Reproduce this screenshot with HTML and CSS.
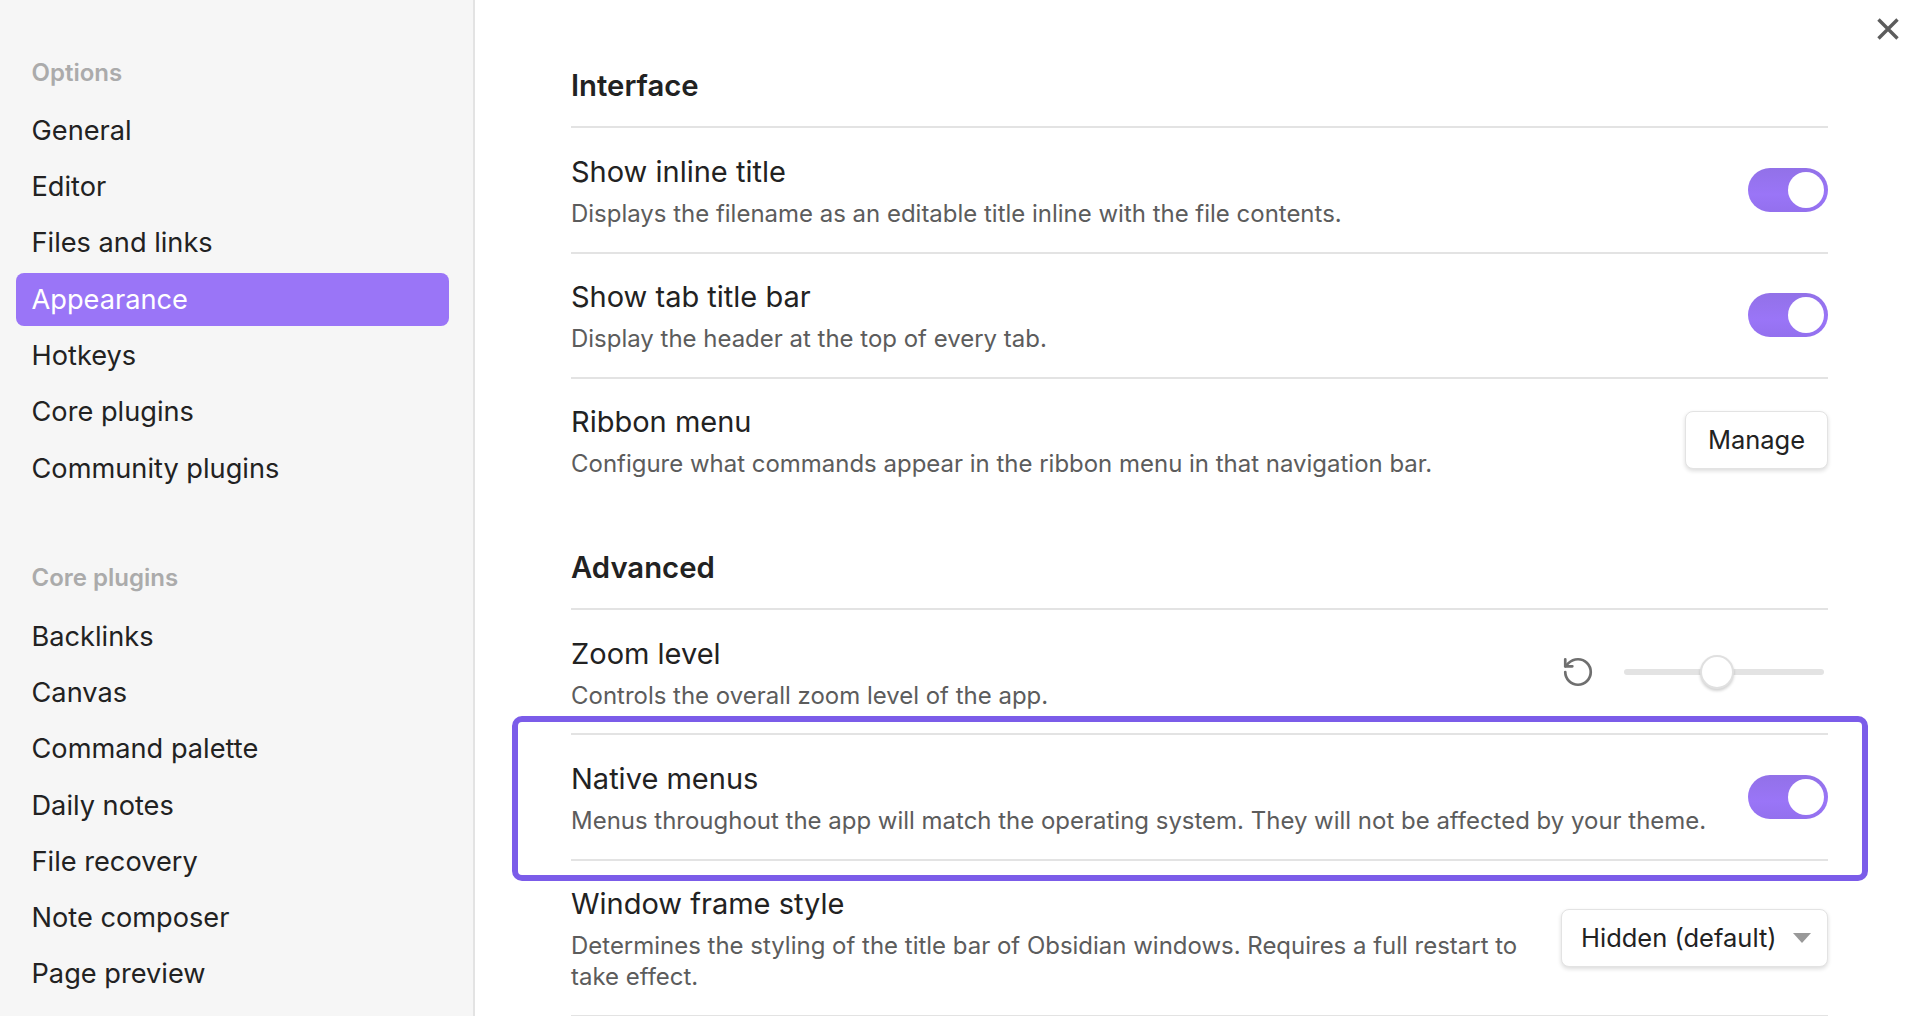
FILE: index.html
```html
<!DOCTYPE html>
<html lang="en">
<head>
  <meta charset="UTF-8" />
  <title>Settings</title>
  <link rel="stylesheet" href="styles.css">
</head>
<body>

<div class="app">
  <nav class="sidebar">
    <div class="group">
      <div class="group-title">Options</div>
      <div class="nav-item">General</div>
      <div class="nav-item">Editor</div>
      <div class="nav-item">Files and links</div>
      <div class="nav-item active">Appearance</div>
      <div class="nav-item">Hotkeys</div>
      <div class="nav-item">Core plugins</div>
      <div class="nav-item">Community plugins</div>
    </div>
    <div class="group">
      <div class="group-title">Core plugins</div>
      <div class="nav-item">Backlinks</div>
      <div class="nav-item">Canvas</div>
      <div class="nav-item">Command palette</div>
      <div class="nav-item">Daily notes</div>
      <div class="nav-item">File recovery</div>
      <div class="nav-item">Note composer</div>
      <div class="nav-item">Page preview</div>
    </div>
  </nav>

  <main class="content">
    <svg class="close" viewBox="0 0 22 22" width="22" height="22">
      <path d="M1.5 1.5 20.5 20.5M20.5 1.5 1.5 20.5" />
    </svg>

    <h2 class="section first">Interface</h2>

    <div class="row">
      <div class="info">
        <div class="name">Show inline title</div>
        <div class="desc">Displays the filename as an editable title inline with the file contents.</div>
      </div>
      <div class="toggle"><span class="knob"></span></div>
    </div>

    <div class="row">
      <div class="info">
        <div class="name">Show tab title bar</div>
        <div class="desc">Display the header at the top of every tab.</div>
      </div>
      <div class="toggle"><span class="knob"></span></div>
    </div>

    <div class="row no-line">
      <div class="info">
        <div class="name">Ribbon menu</div>
        <div class="desc">Configure what commands appear in the ribbon menu in that navigation bar.</div>
      </div>
      <button class="btn">Manage</button>
    </div>

    <h2 class="section">Advanced</h2>

    <div class="row">
      <div class="info">
        <div class="name">Zoom level</div>
        <div class="desc">Controls the overall zoom level of the app.</div>
      </div>
      <div class="zoom-ctrl">
        <svg class="reset" viewBox="0 0 24 24" width="34" height="34">
          <path d="M3 12a9 9 0 1 0 9-9 9.75 9.75 0 0 0-6.74 2.74L3 8" />
          <path d="M3 3v5h5" />
        </svg>
        <div class="slider"><span class="thumb"></span></div>
      </div>
    </div>

    <div class="row highlighted">
      <div class="info">
        <div class="name">Native menus</div>
        <div class="desc">Menus throughout the app will match the operating system. They will not be affected by your theme.</div>
      </div>
      <div class="toggle"><span class="knob"></span></div>
      <div class="outline"></div>
    </div>

    <div class="row tall">
      <div class="info narrow">
        <div class="name">Window frame style</div>
        <div class="desc">Determines the styling of the title bar of Obsidian windows. Requires a full restart to take effect.</div>
      </div>
      <div class="select">Hidden (default)<span class="caret"></span></div>
    </div>
  </main>
</div>

</body>
</html>
```

FILE: styles.css
```css
html, body {
  margin: 0;
  padding: 0;
  height: 100%;
  overflow: hidden;
  background: #fff;
  color: #222;
  font-family: Inter, "Liberation Sans", sans-serif;
}

.app {
  display: flex;
  height: 100vh;
}

/* sidebar */
.sidebar {
  width: 473px;
  flex: none;
  box-sizing: content-box;
  padding-top: 52.6px;
  background: #f6f6f6;
  border-right: 2px solid #e3e3e3;
}

.group {
  display: flex;
  flex-direction: column;
  gap: 3.3px;
  margin: 0 24px 63.7px 16px;
}

.group-title {
  height: 40px;
  line-height: 40px;
  margin-bottom: 8px;
  padding-left: 15.5px;
  font-size: 24px;
  font-weight: 600;
  color: #ababab;
}

.nav-item {
  height: 53px;
  line-height: 53px;
  padding-left: 15.5px;
  border-radius: 8px;
  font-size: 27.2px;
}

.nav-item.active {
  background: #9a75f7;
  color: #fff;
}

/* main panel */
.content {
  position: relative;
  flex: 1;
  padding: 0 82px 0 96px;
}

.close {
  position: absolute;
  top: 18px;
  right: 11px;
  fill: none;
  stroke: #5c5c5c;
  stroke-width: 3.4;
}

.section {
  display: flex;
  align-items: flex-end;
  box-sizing: border-box;
  height: 105px;
  margin: 0;
  padding-bottom: 23px;
  border-bottom: 2px solid #e3e3e3;
  font-size: 29.3px;
  font-weight: 600;
}

.section.first {
  height: 128px;
}

.row {
  position: relative;
  display: flex;
  align-items: center;
  justify-content: space-between;
  box-sizing: border-box;
  height: 125.6px;
  border-bottom: 2px solid #e3e3e3;
}

.section + .row .info {
  padding-top: 2px;
}

.row.no-line {
  padding-bottom: 3px;
  border-bottom: none;
}

.row.no-line .btn {
  margin-bottom: 1px;
}

.row.tall {
  height: 156px;
}

.info.narrow {
  width: 960px;
}

.name {
  font-size: 29px;
  line-height: 40px;
}

.desc {
  margin-top: 6px;
  font-size: 23.98px;
  line-height: 31px;
  color: #5c5c5c;
}

.toggle {
  position: relative;
  flex: none;
  width: 80px;
  height: 44px;
  border-radius: 22px;
  background: linear-gradient(#9271e8, #9a75f7 60%, #9370ee);
}

.knob {
  position: absolute;
  top: 4px;
  right: 4px;
  width: 36px;
  height: 36px;
  border-radius: 50%;
  background: #fff;
}

.btn {
  width: 143px;
  height: 58px;
  border: 1px solid #e3e3e3;
  border-radius: 8px;
  background: #fff;
  box-shadow: 0 2px 4px rgba(0,0,0,0.14);
  color: #222;
  font-family: inherit;
  font-size: 25.5px;
}

.zoom-ctrl {
  display: flex;
  align-items: center;
  gap: 29px;
  margin-right: 4px;
}

.reset {
  fill: none;
  stroke: #6f6f6f;
  stroke-width: 1.9;
  stroke-linecap: round;
  stroke-linejoin: round;
}

.slider {
  position: relative;
  width: 200px;
  height: 6px;
  border-radius: 3px;
  background: #e3e3e3;
}

.thumb {
  position: absolute;
  top: -14px;
  left: 76px;
  box-sizing: border-box;
  width: 34px;
  height: 34px;
  border: 2px solid #e0e0e0;
  border-radius: 50%;
  background: #fff;
  box-shadow: 0 2px 3px rgba(0,0,0,0.18);
}

.outline {
  position: absolute;
  top: -19px;
  left: -59px;
  right: -40px;
  bottom: -22px;
  border: 6px solid #7b5ce9;
  border-radius: 10px;
  pointer-events: none;
}

.select {
  display: flex;
  align-items: center;
  flex: none;
  box-sizing: border-box;
  width: 267px;
  height: 58px;
  padding-left: 19px;
  border: 1px solid #e3e3e3;
  border-radius: 8px;
  background: #fff;
  box-shadow: 0 2px 4px rgba(0,0,0,0.14);
  font-size: 25.5px;
}

.caret {
  width: 0;
  height: 0;
  margin-left: 16px;
  border-left: 9px solid transparent;
  border-right: 9px solid transparent;
  border-top: 10px solid #999;
}
```
